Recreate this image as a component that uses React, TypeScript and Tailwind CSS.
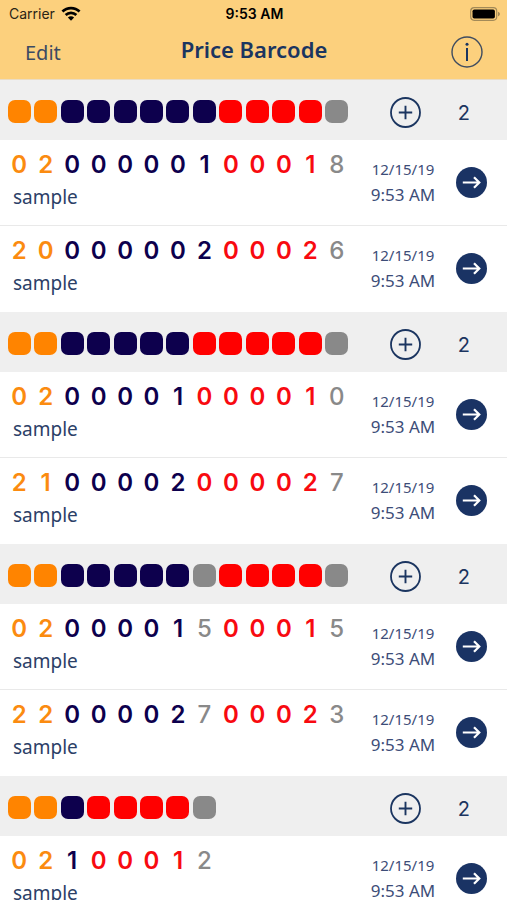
import React from "react";

type Part = "flag" | "item" | "price" | "check";

interface Entry {
  code: string;
  name: string;
  date: string;
  time: string;
}

interface Group {
  pattern: Part[];
  entries: Entry[];
}

const squareColor: Record<Part, string> = {
  flag: "bg-[#ff8400]",
  item: "bg-[#0d004d]",
  price: "bg-[#ff0000]",
  check: "bg-[#898989]",
};

const digitColor: Record<Part, string> = {
  flag: "text-[#fb8b10] font-semibold",
  item: "text-[#0d004d] font-semibold",
  price: "text-[#f80a10] font-semibold",
  check: "text-[#898989] font-medium",
};

const letters: Record<string, Part> = { F: "flag", I: "item", P: "price", C: "check" };

const pattern = (text: string): Part[] => text.split("").map((c) => letters[c]);

const entry = (code: string): Entry => ({
  code,
  name: "sample",
  date: "12/15/19",
  time: "9:53 AM",
});

const groups: Group[] = [
  { pattern: pattern("FFIIIIIIPPPPC"), entries: [entry("0200000100018"), entry("2000000200026")] },
  { pattern: pattern("FFIIIIIPPPPPC"), entries: [entry("0200001000010"), entry("2100002000027")] },
  { pattern: pattern("FFIIIIICPPPPC"), entries: [entry("0200001500015"), entry("2200002700023")] },
  { pattern: pattern("FFIPPPPC"), entries: [entry("02100012"), entry("02200029")] },
];

function StatusBar() {
  return (
    <div className="grid h-[27px] grid-cols-3 items-center pl-[9px] pr-[7px] font-[Inter,sans-serif] text-sm text-black">
      <div className="flex items-center gap-[6px] text-[#2a2416]">
        <span>Carrier</span>
        <svg width="20" height="15" viewBox="0 0 18 14" fill="none" stroke="#000" strokeWidth="2.5" aria-hidden="true">
          <path d="M1 5.2C5.4.9 12.6.9 17 5.2" />
          <path d="M4 8.4C6.8 5.7 11.2 5.7 14 8.4" />
          <path d="M9 13.7 6.1 10.8C7.7 9.3 10.3 9.3 11.9 10.8Z" fill="#000" stroke="none" />
        </svg>
      </div>
      <span className="text-center font-semibold">9:53 AM</span>
      <svg className="justify-self-end" width="30" height="14" viewBox="0 0 30 14" aria-hidden="true">
        <rect x="0.7" y="0.7" width="26" height="12.6" rx="3.5" fill="none" stroke="#a38a58" strokeWidth="1.2" />
        <rect x="2.5" y="2.5" width="22.4" height="9" rx="1.8" fill="#000" />
        <path d="M28 4.7c1.3.4 1.9 1.3 1.9 2.3s-.6 1.9-1.9 2.3Z" fill="#a38a58" />
      </svg>
    </div>
  );
}

function NavBar() {
  return (
    <div className="grid h-[52px] grid-cols-[1fr_auto_1fr] items-center pl-[25px] pr-6 text-[#1b3560]">
      <button type="button" className="justify-self-start text-xl text-[#3b4a63]">
        Edit
      </button>
      <h1 className="pb-2 text-[22px] font-semibold">Price Barcode</h1>
      <button type="button" aria-label="Information" className="justify-self-end pb-0.5">
        <svg width="32" height="32" viewBox="0 0 32 32" fill="none" aria-hidden="true">
          <circle cx="16" cy="16" r="15" stroke="#3f4c60" strokeWidth="1.4" />
          <circle cx="16" cy="8.3" r="1.5" fill="#1b3560" />
          <path d="M16 12v13" stroke="#1b3560" strokeWidth="2" />
        </svg>
      </button>
    </div>
  );
}

function GroupHeader({ group }: { group: Group }) {
  return (
    <div className="flex h-[60px] items-center bg-[#efefef] pl-[6px] pt-0.5">
      <div className="grid flex-1 grid-cols-13 justify-items-center">
        {group.pattern.map((part, i) => (
          <span key={i} className={`size-[23px] rounded-[7px] ${squareColor[part]}`} />
        ))}
      </div>
      <div className="flex w-[157px] items-center justify-between pl-10 pr-[37px] pt-0.5">
        <button type="button" aria-label="Add barcode">
          <svg width="31" height="31" viewBox="0 0 31 31" fill="none" stroke="#1b3560" aria-hidden="true">
            <circle cx="15.5" cy="15.5" r="14.5" strokeWidth="1.8" />
            <path d="M15.5 8.8v13.4M8.8 15.5h13.4" strokeWidth="1.9" />
          </svg>
        </button>
        <span className="pt-0.5 font-[Inter,sans-serif] text-xl text-[#1b3560]">{group.entries.length}</span>
      </div>
    </div>
  );
}

function EntryRow({ entry, parts, last }: { entry: Entry; parts: Part[]; last: boolean }) {
  return (
    <li className={`flex h-[86px] items-center border-b bg-white pl-[6px] ${last ? "border-white" : "border-[#e9e9e9]"}`}>
      <div className="flex-1 pb-1">
        <div className="grid grid-cols-13 text-center font-[Inter,sans-serif] text-2xl">
          {entry.code.split("").map((digit, i) => (
            <span key={i} className={digitColor[parts[i]]}>
              {digit}
            </span>
          ))}
        </div>
        <p className="pl-[7px] text-[19px] leading-8 text-[#2c4067]">{entry.name}</p>
      </div>
      <div className="w-[106px] pb-0.5 text-center text-[#3d4d78]">
        <p className="text-[15px] leading-[26px]">{entry.date}</p>
        <p className="text-[17px] leading-[26px]">{entry.time}</p>
      </div>
      <button type="button" aria-label="Open barcode" className="mr-5">
        <svg width="31" height="31" viewBox="0 0 31 31" fill="none" aria-hidden="true">
          <circle cx="15.5" cy="15.5" r="15.5" fill="#1a3364" />
          <path d="M6.8 15.5h16.4M18 10.2l5.3 5.3-5.3 5.3" stroke="#fff" strokeWidth="2.2" />
        </svg>
      </button>
    </li>
  );
}

export default function App() {
  return (
    <div className="flex h-screen flex-col bg-white font-['Noto_Sans',sans-serif]">
      <header className="border-b border-[#eadcc4] bg-[#fcd07d]">
        <StatusBar />
        <NavBar />
      </header>
      <main className="min-h-0 flex-1 overflow-y-auto [scrollbar-width:none]">
        {groups.map((group, g) => (
          <section key={g}>
            <GroupHeader group={group} />
            <ul>
              {group.entries.map((item, i) => (
                <EntryRow
                  key={item.code}
                  entry={item}
                  parts={group.pattern}
                  last={i === group.entries.length - 1}
                />
              ))}
            </ul>
          </section>
        ))}
      </main>
    </div>
  );
}
